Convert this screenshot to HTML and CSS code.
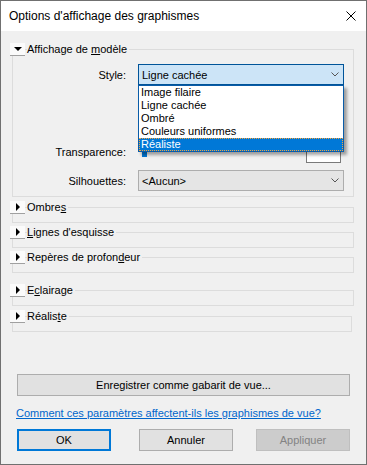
FILE: index.html
```html
<!DOCTYPE html>
<html lang="fr">
<head>
    <meta charset="UTF-8">
    <meta name="viewport" content="width=device-width, initial-scale=1.0">
    <title>Options d'affichage des graphismes</title>
    <link rel="stylesheet" href="styles.css">
</head>
<body>
<div class="window">
    <header class="titlebar">
        <span class="title">Options d'affichage des graphismes</span>
        <span class="close" title="Fermer">
            <svg width="10" height="10" viewBox="0 0 10 10"><path d="M0.5 0.5L9.5 9.5M9.5 0.5L0.5 9.5" stroke="#000" stroke-width="1" fill="none"/></svg>
        </span>
    </header>

    <main class="content">
        <!-- Expanded group -->
        <section class="group">
            <div class="group-head">
                <span class="toggle"><i class="arrow-down"></i></span>
                <span class="group-title">Affichage de <u>m</u>odèle</span>
            </div>
            <div class="group-box model-box">
                <div class="field-row">
                    <label>Style:</label>
                    <div class="combo-wrap">
                        <div class="combo combo-active">
                            <span>Ligne cachée</span>
                            <svg class="chevron" width="8" height="5" viewBox="0 0 8 5"><polyline points="0.5,0.5 4,4 7.5,0.5" stroke="#555" fill="none"/></svg>
                        </div>
                        <ul class="combo-list">
                            <li>Image filaire</li>
                            <li>Ligne cachée</li>
                            <li>Ombré</li>
                            <li>Couleurs uniformes</li>
                            <li class="selected">Réaliste</li>
                        </ul>
                    </div>
                </div>
                <div class="field-row transp-row">
                    <label>Transparence:</label>
                    <div class="transp">
                        <div class="slider"><span class="thumb"></span></div>
                        <div class="spin">0</div>
                    </div>
                </div>
                <div class="field-row silhouette-row">
                    <label>Silhouettes:</label>
                    <div class="combo">
                        <span>&lt;Aucun&gt;</span>
                        <svg class="chevron" width="8" height="5" viewBox="0 0 8 5"><polyline points="0.5,0.5 4,4 7.5,0.5" stroke="#555" fill="none"/></svg>
                    </div>
                </div>
            </div>
        </section>

        <!-- Collapsed groups -->
        <section class="group group-shadows">
            <div class="group-head">
                <span class="toggle"><i class="arrow-right"></i></span>
                <span class="group-title">Ombre<u>s</u></span>
            </div>
            <div class="group-box"></div>
        </section>

        <section class="group">
            <div class="group-head">
                <span class="toggle"><i class="arrow-right"></i></span>
                <span class="group-title"><u>L</u>ignes d'esquisse</span>
            </div>
            <div class="group-box"></div>
        </section>

        <section class="group">
            <div class="group-head">
                <span class="toggle"><i class="arrow-right"></i></span>
                <span class="group-title">Repères de profon<u>d</u>eur</span>
            </div>
            <div class="group-box"></div>
        </section>

        <section class="group group-lighting">
            <div class="group-head">
                <span class="toggle"><i class="arrow-right"></i></span>
                <span class="group-title">E<u>c</u>lairage</span>
            </div>
            <div class="group-box"></div>
        </section>

        <section class="group group-realistic">
            <div class="group-head">
                <span class="toggle"><i class="arrow-right"></i></span>
                <span class="group-title">Réalis<u>t</u>e</span>
            </div>
            <div class="group-box"></div>
        </section>

        <footer class="dialog-foot">
            <button class="btn btn-wide">Enregistrer comme gabarit de vue...</button>
            <a class="help-link" href="#">Comment ces paramètres affectent-ils les graphismes de vue?</a>
            <div class="btn-row">
                <button class="btn btn-default">OK</button>
                <button class="btn btn-cancel">Annuler</button>
                <button class="btn btn-apply" disabled>Appliquer</button>
            </div>
        </footer>
    </main>
</div>
</body>
</html>
```

FILE: styles.css
```css
* {
    box-sizing: border-box;
}

body {
    margin: 0;
    font-family: "Liberation Sans", Arial, sans-serif;
    font-size: 11px;
    color: #000;
    background: #f0f0f0;
}

.window {
    width: 367px;
    height: 465px;
    border: 1px solid #707070;
    background: #f0f0f0;
    display: flex;
    flex-direction: column;
}

.titlebar {
    height: 30px;
    flex-shrink: 0;
    background: #fff;
    display: flex;
    align-items: center;
    justify-content: space-between;
    padding: 0 10px 0 8px;
}

.title {
    font-size: 12px;
}

.close {
    display: flex;
    margin-top: -1px;
}

.content {
    flex: 1;
    display: flex;
    flex-direction: column;
    padding: 12px 12px 0 9px;
}

/* group boxes */
.group + .group {
    margin-top: 3px;
}

.group-shadows,
.group-realistic {
    margin-top: 4px !important;
}

.group-lighting {
    margin-top: 11px !important;
}

.group-head {
    display: flex;
    align-items: center;
    height: 13px;
    position: relative;
    z-index: 1;
}

.toggle {
    width: 15px;
    height: 13px;
    background: #fbfbfb;
    border-bottom: 1px solid #a0a0a0;
    display: flex;
    align-items: center;
    justify-content: center;
}

.arrow-down {
    border-left: 4px solid transparent;
    border-right: 4px solid transparent;
    border-top: 4px solid #000;
}

.arrow-right {
    border-top: 4px solid transparent;
    border-bottom: 4px solid transparent;
    border-left: 4px solid #000;
    margin-left: 1px;
}

.group-title {
    margin-left: 2px;
    padding-right: 2px;
    background: #f0f0f0;
    line-height: 13px;
}

.group-box {
    margin: -7px 0 0 2px;
    height: 16px;
    border: 1px solid #dcdcdc;
}

.group-realistic .group-box {
    margin-right: 2px;
}

.model-box {
    height: auto;
    padding: 14px 0 5px;
}

/* fields */
.field-row {
    display: grid;
    grid-template-columns: 113px 206px;
    column-gap: 12px;
    align-items: center;
}

.field-row label {
    text-align: right;
}

.transp-row {
    margin-top: 56px;
}

.silhouette-row {
    margin-top: 7px;
}

.combo-wrap {
    position: relative;
}

.combo {
    height: 21px;
    border: 1px solid #adadad;
    background: #e5e5e5;
    display: flex;
    align-items: center;
    justify-content: space-between;
    padding: 0 4px 0 3px;
}

.combo-active {
    background: #cce4f7;
    border-color: #005499;
}

.chevron {
    display: block;
}

.combo-list {
    position: absolute;
    top: 100%;
    left: 0;
    right: 0;
    z-index: 5;
    margin: 0;
    padding: 0;
    list-style: none;
    background: #fff;
    border: 1px solid #0a5ca8;
    box-shadow: 3px 3px 3px rgba(0, 0, 0, 0.35);
}

.combo-list li {
    height: 13px;
    line-height: 13px;
    padding-left: 2px;
}

.combo-list li.selected {
    background: #0078d7;
    color: #fff;
    outline: 1px dotted #f7a33a;
    outline-offset: -1px;
}

.transp {
    display: flex;
    justify-content: space-between;
    height: 22px;
}

.slider {
    flex: 1;
    padding-left: 4px;
}

.thumb {
    display: block;
    width: 5px;
    height: 16px;
    background: #0078d7;
}

.spin {
    width: 35px;
    height: 22px;
    margin-right: 3px;
    border: 1px solid #7a7a7a;
    background: #fff;
    padding: 0 0 0 5px;
    line-height: 13px;
}

/* footer */
.dialog-foot {
    margin-top: 42px;
    display: flex;
    flex-direction: column;
}

.btn {
    height: 22px;
    padding: 0;
    font-family: inherit;
    font-size: 11px;
    color: #000;
    background: #e1e1e1;
    border: 1px solid #adadad;
}

.btn-wide {
    margin: 0 4px 0 7px;
}

.help-link {
    margin: 11px 0 0 6px;
    line-height: 13px;
    color: #0066cc;
}

.btn-row {
    display: flex;
    margin: 9px 4px 0 7px;
}

.btn-row .btn {
    width: 94px;
}

.btn-default {
    border: 2px solid #0078d7;
}

.btn-cancel {
    margin-left: 28px;
}

.btn-apply {
    margin-left: auto;
    background: #cccccc;
    border-color: #bfbfbf;
    color: #838383;
}
```
